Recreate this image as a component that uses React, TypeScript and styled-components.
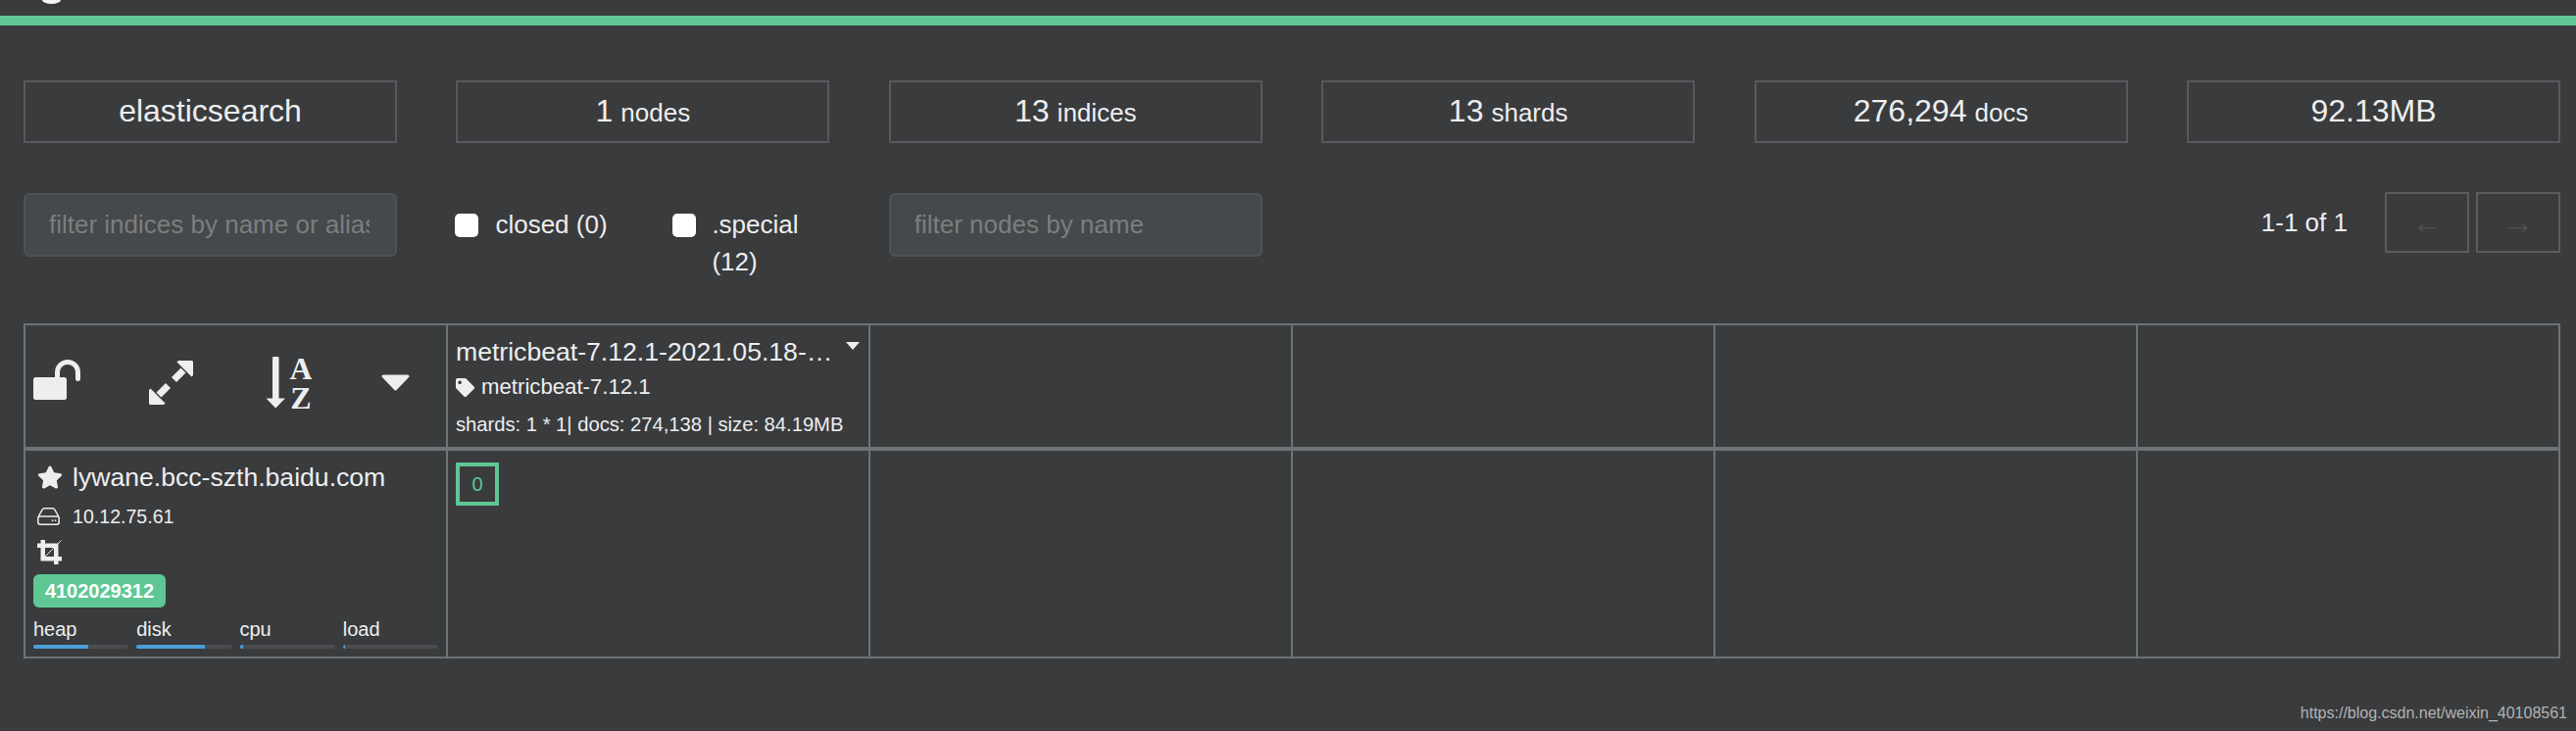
import React from "react";
import styled, { createGlobalStyle } from "styled-components";
import { FaStar, FaTag } from "react-icons/fa";

const GlobalStyle = createGlobalStyle`
    html,
    body {
        margin: 0;
        background: #3a3b3d;
    }
    body {
        font-family: "Liberation Sans", Arial, sans-serif;
        color: #eceef0;
        overflow: hidden;
    }
`;

const Page = styled.div`
    position: relative;
    width: 2628px;
    height: 746px;
    background: #3a3b3d;
    overflow: hidden;
`;

const TopBar = styled.header`
    height: 16px;
    border-bottom: 10px solid #5ec794;
    overflow: hidden;
`;

const LogoTip = styled.div`
    width: 19px;
    height: 4px;
    margin-left: 43px;
    background: #f4f5f6;
    border-radius: 0 0 50% 50% / 0 0 100% 100%;
`;

const Content = styled.main`
    padding: 56px 16px 0 24px;
`;

const SixColumns = styled.section`
    display: grid;
    grid-template-columns: repeat(6, 381px);
    column-gap: 60.4px;
`;

const StatBox = styled.div`
    display: flex;
    align-items: baseline;
    justify-content: center;
    gap: 8px;
    height: 64px;
    box-sizing: border-box;
    padding-top: 13px;
    border: 2px solid #57595c;
    font-size: 32px;
    line-height: 1;
`;

const StatUnit = styled.span`
    font-size: 26px;
`;

const FilterRow = styled(SixColumns)`
    height: 133px;
    margin-top: 51px;
`;

const FilterInput = styled.input`
    width: 100%;
    height: 65px;
    box-sizing: border-box;
    padding: 0 26px 0 24px;
    background: #45494b;
    border: 2px solid #4f5254;
    border-radius: 6px;
    color: #eceef0;
    font-family: inherit;
    font-size: 26px;
    outline: none;

    &::placeholder {
        color: #7b7e80;
        opacity: 1;
    }
`;

const CheckColumns = styled.div`
    display: grid;
    grid-template-columns: 222px 1fr;
    padding-top: 13px;
    margin-left: -1px;
    align-self: start;
`;

const CheckLabel = styled.label<{ $gap: number }>`
    display: flex;
    align-items: flex-start;
    gap: ${(p) => p.$gap}px;
    font-size: 26px;
    line-height: 38px;
`;

const CheckText = styled.span<{ $wrap?: boolean }>`
    white-space: ${(p) => (p.$wrap ? "normal" : "nowrap")};
    max-width: ${(p) => (p.$wrap ? "110px" : "none")};
`;

const CheckBox = styled.input`
    appearance: none;
    flex: none;
    width: 24px;
    height: 24px;
    margin: 8px 0 0;
    background: #ffffff;
    border-radius: 5px;
`;

const Pager = styled.div`
    grid-column: 5 / span 2;
    display: flex;
    justify-content: flex-end;
    align-items: flex-start;
    gap: 7px;
    margin-top: -1px;
`;

const PagerText = styled.span`
    margin-right: 31px;
    font-size: 26px;
    line-height: 62px;
`;

const PagerButton = styled.button`
    width: 86px;
    height: 62px;
    padding: 0;
    background: transparent;
    border: 2px solid #5a5c5e;
    color: #505254;
    font-family: inherit;
    font-size: 32px;
    line-height: 1;
`;

const Overview = styled.section`
    display: grid;
    grid-template-columns: repeat(5, 431px) 1fr;
    grid-template-rows: 128px 210px;
    width: 2588px;
    box-sizing: border-box;
    border: 2px solid #6e7376;
`;

const Cell = styled.div<{ $head?: boolean; $last?: boolean }>`
    min-width: 0;
    border-right: ${(p) => (p.$last ? "none" : "2px solid #6e7376")};
    border-bottom: ${(p) => (p.$head ? "4px solid #6e7376" : "none")};
`;

const Controls = styled.div`
    display: grid;
    grid-template-columns: repeat(4, 118.3px);
    align-items: center;
    height: 100%;
    box-sizing: border-box;
    padding: 0 0 8px 8px;
`;

const LockSvg = styled.svg`
    margin-bottom: 5px;
`;

const IndexHead = styled.div`
    padding: 8px 8px 0;
`;

const IndexTitle = styled.div`
    display: flex;
    align-items: flex-start;
    height: 38px;
`;

const IndexName = styled.span`
    width: 385px;
    overflow: hidden;
    white-space: nowrap;
    text-overflow: ellipsis;
    font-size: 26.6px;
    line-height: 38px;
`;

const TitleCaret = styled.svg`
    margin: 9px 0 0 13px;
`;

const AliasRow = styled.div`
    display: flex;
    align-items: center;
    gap: 7px;
    height: 34px;
    font-size: 22.2px;
`;

const IndexStats = styled.div`
    margin-top: 3px;
    font-size: 20.2px;
    line-height: 36px;
    white-space: nowrap;
`;

const NodeCell = styled.div`
    padding: 7px 8px 0;
`;

const NodeLine = styled.div<{ $height: number; $size?: number }>`
    display: grid;
    grid-template-columns: 40px 1fr;
    align-items: center;
    height: ${(p) => p.$height}px;
    font-size: ${(p) => p.$size ?? 26.6}px;
    white-space: nowrap;
`;

const NodeIcon = styled.span`
    display: flex;
    padding-left: 4px;
`;

const LoadBadge = styled.span`
    display: block;
    width: 135px;
    height: 34px;
    margin-top: 7px;
    background: #5ec794;
    border-radius: 6px;
    color: #ffffff;
    font-size: 20px;
    font-weight: 700;
    line-height: 34px;
    text-align: center;
`;

const Meters = styled.div`
    display: grid;
    grid-template-columns: repeat(4, 1fr);
    column-gap: 8px;
    margin-top: 8px;
`;

const MeterLabel = styled.div`
    font-size: 20px;
    line-height: 28px;
`;

const MeterTrack = styled.div`
    height: 4px;
    margin-top: 2px;
    background: #4a4c4f;
    border-radius: 2px;
    overflow: hidden;
`;

const MeterFill = styled.div`
    height: 100%;
    background: #4a9fd8;
`;

const ShardCell = styled.div`
    padding: 12px 8px 0;
`;

const Shard = styled.div`
    display: flex;
    align-items: center;
    justify-content: center;
    width: 44px;
    height: 44px;
    box-sizing: border-box;
    border: 4px solid #5ec794;
    color: #5ec794;
    font-size: 20px;
`;

const Watermark = styled.div`
    position: absolute;
    right: 9px;
    top: 718px;
    color: #b2b3b4;
    font-size: 16px;
    line-height: 20px;
`;

const ICON = "#eceef0";

const LockIcon = () => (
    <LockSvg width="48" height="41" viewBox="0 0 48 41">
        <rect x="0" y="18" width="34" height="23" rx="2.5" fill={ICON} />
        <path
            d="M24.5 19V13A10.5 10.5 0 0 1 45.5 13V19.5"
            fill="none"
            stroke={ICON}
            strokeWidth="5"
            strokeLinecap="round"
        />
    </LockSvg>
);

const ExpandIcon = () => (
    <svg width="45" height="45" viewBox="0 0 45 45" fill={ICON}>
        <path d="M28.5 1.5 30 0H44L45 1V15L43.5 16.5Z" />
        <path d="M0 30 1.5 28.5 16.5 43.5 15 45H1L0 44Z" />
        <path d="M32.5 7.5 37.5 12.5 28 22 23 17Z" />
        <path d="M12.5 37.5 7.5 32.5 17 23 22 28Z" />
    </svg>
);

const SortIcon = () => (
    <svg width="47" height="53" viewBox="0 0 47 53" fill={ICON}>
        <rect x="7" y="0" width="6.5" height="44" rx="1" />
        <path d="M0.5 42.5H20L10.2 52.5Z" />
        <text x="36" y="23" textAnchor="middle" fontFamily="'Liberation Serif', serif" fontWeight="700" fontSize="32">
            A
        </text>
        <text x="36" y="53" textAnchor="middle" fontFamily="'Liberation Serif', serif" fontWeight="700" fontSize="32">
            Z
        </text>
    </svg>
);

const CaretIcon = () => (
    <svg width="29" height="17" viewBox="0 0 29 17">
        <path d="M2 2H27L14.5 15Z" fill={ICON} stroke={ICON} strokeWidth="3" strokeLinejoin="round" />
    </svg>
);

const CropIcon = () => (
    <svg width="25" height="25" viewBox="0 0 25 25" fill={ICON}>
        <path d="M3.5 0H8V3.5H21.5V17H25V21.5H21.5V25H17V21.5H3.5V8H0V3.5H3.5ZM8 8V17H17V8Z" />
        <path d="M6.5 18.5 24.5 0.5" stroke={ICON} strokeWidth="1" fill="none" />
    </svg>
);

const DiskIcon = () => (
    <svg width="23" height="18" viewBox="0 0 23 18" fill="none" stroke={ICON} strokeWidth="1.5">
        <path d="M1 9.5 5 2.4Q5.8 0.8 7.5 0.8H15.5Q17.2 0.8 18 2.4L22 9.5" />
        <rect x="0.8" y="9" width="21.4" height="8.2" rx="2.2" />
        <circle cx="15.5" cy="13.2" r="0.9" fill={ICON} stroke="none" />
        <circle cx="18.5" cy="13.2" r="0.9" fill={ICON} stroke="none" />
    </svg>
);

const stats = [
    { value: "elasticsearch" },
    { value: "1", unit: "nodes" },
    { value: "13", unit: "indices" },
    { value: "13", unit: "shards" },
    { value: "276,294", unit: "docs" },
    { value: "92.13MB" },
];

const meters = [
    { label: "heap", used: 58 },
    { label: "disk", used: 71.5 },
    { label: "cpu", used: 4 },
    { label: "load", used: 2 },
];

const App = () => {
    return (
        <Page>
            <GlobalStyle />
            <TopBar>
                <LogoTip />
            </TopBar>
            <Content>
                <SixColumns>
                    {stats.map(({ value, unit }) => (
                        <StatBox key={`${value}-${unit}`}>
                            <span>{value}</span>
                            {unit && <StatUnit>{unit}</StatUnit>}
                        </StatBox>
                    ))}
                </SixColumns>

                <FilterRow>
                    <FilterInput placeholder="filter indices by name or aliases" />
                    <CheckColumns>
                        <CheckLabel $gap={17}>
                            <CheckBox type="checkbox" />
                            <CheckText>closed (0)</CheckText>
                        </CheckLabel>
                        <CheckLabel $gap={16}>
                            <CheckBox type="checkbox" />
                            <CheckText $wrap>.special (12)</CheckText>
                        </CheckLabel>
                    </CheckColumns>
                    <FilterInput placeholder="filter nodes by name" />
                    <Pager>
                        <PagerText>1-1 of 1</PagerText>
                        <PagerButton>←</PagerButton>
                        <PagerButton>→</PagerButton>
                    </Pager>
                </FilterRow>

                <Overview>
                    <Cell $head>
                        <Controls>
                            <LockIcon />
                            <ExpandIcon />
                            <SortIcon />
                            <CaretIcon />
                        </Controls>
                    </Cell>
                    <Cell $head>
                        <IndexHead>
                            <IndexTitle>
                                <IndexName>metricbeat-7.12.1-2021.05.18-000001</IndexName>
                                <TitleCaret width="14" height="8" viewBox="0 0 14 8">
                                    <path d="M0 0H14L7 8Z" fill={ICON} />
                                </TitleCaret>
                            </IndexTitle>
                            <AliasRow>
                                <FaTag size={19} color={ICON} />
                                <span>metricbeat-7.12.1</span>
                            </AliasRow>
                            <IndexStats>shards: 1 * 1| docs: 274,138 | size: 84.19MB</IndexStats>
                        </IndexHead>
                    </Cell>
                    {[0, 1, 2, 3].map((n) => (
                        <Cell key={n} $head $last={n === 3} />
                    ))}

                    <Cell>
                        <NodeCell>
                            <NodeLine $height={40}>
                                <NodeIcon>
                                    <FaStar size={26} color={ICON} />
                                </NodeIcon>
                                <span>lywane.bcc-szth.baidu.com</span>
                            </NodeLine>
                            <NodeLine $height={40} $size={19.6}>
                                <NodeIcon>
                                    <DiskIcon />
                                </NodeIcon>
                                <span>10.12.75.61</span>
                            </NodeLine>
                            <NodeLine $height={32}>
                                <NodeIcon>
                                    <CropIcon />
                                </NodeIcon>
                            </NodeLine>
                            <LoadBadge>4102029312</LoadBadge>
                            <Meters>
                                {meters.map(({ label, used }) => (
                                    <div key={label}>
                                        <MeterLabel>{label}</MeterLabel>
                                        <MeterTrack>
                                            <MeterFill style={{ width: `${used}%` }} />
                                        </MeterTrack>
                                    </div>
                                ))}
                            </Meters>
                        </NodeCell>
                    </Cell>
                    <Cell>
                        <ShardCell>
                            <Shard>0</Shard>
                        </ShardCell>
                    </Cell>
                    {[0, 1, 2, 3].map((n) => (
                        <Cell key={n} $last={n === 3} />
                    ))}
                </Overview>
            </Content>
            <Watermark>https://blog.csdn.net/weixin_40108561</Watermark>
        </Page>
    );
};

export default App;
